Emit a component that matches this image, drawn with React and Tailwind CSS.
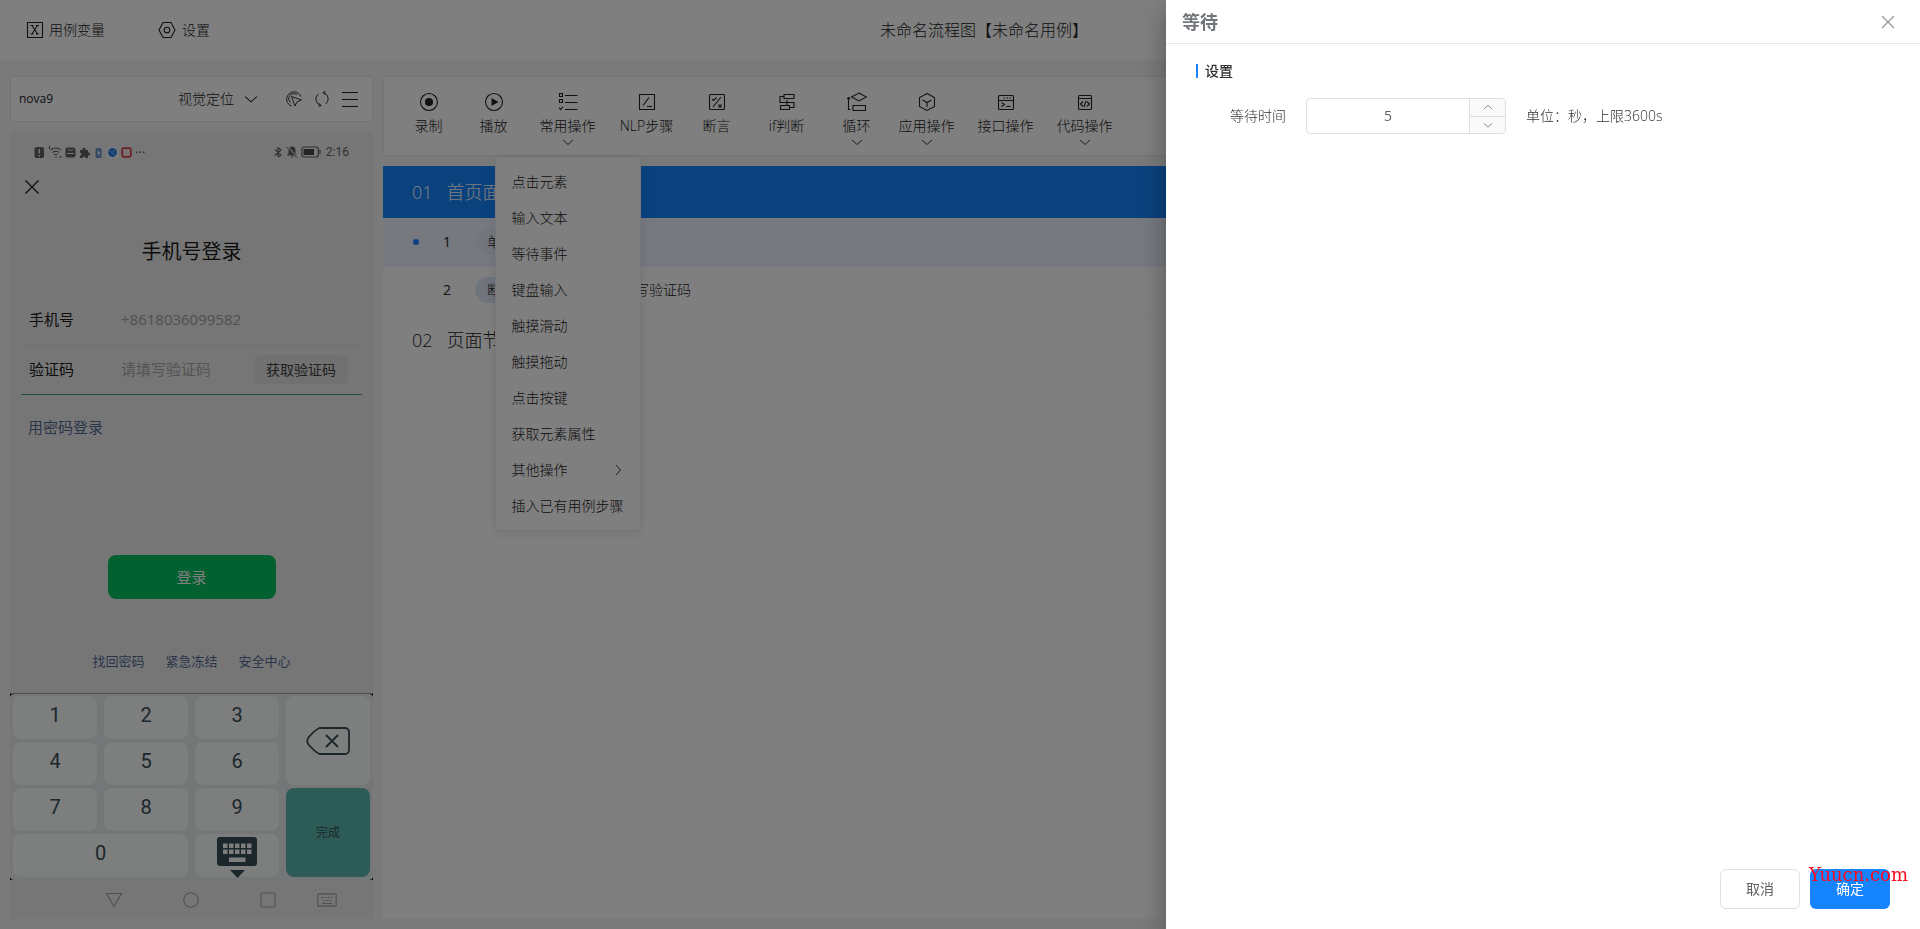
import React, { useState } from 'react';

const TOOLS = [
  { id: 'record', label: '录制', width: 'w-[61px]' },
  { id: 'play', label: '播放', width: 'w-[69px]' },
  { id: 'common', label: '常用操作', width: 'w-[79px]', arrow: true, menu: true },
  { id: 'nlp', label: 'NLP步骤', width: 'w-[79px]' },
  { id: 'assert', label: '断言', width: 'w-[61px]' },
  { id: 'branch', label: 'if判断', width: 'w-[79px]' },
  { id: 'loop', label: '循环', width: 'w-[61px]', arrow: true },
  { id: 'app', label: '应用操作', width: 'w-[79px]', arrow: true },
  { id: 'api', label: '接口操作', width: 'w-[79px]' },
  { id: 'code', label: '代码操作', width: 'w-[79px]', arrow: true },
];

const MENU_ITEMS = [
  { label: '点击元素' },
  { label: '输入文本' },
  { label: '等待事件' },
  { label: '键盘输入' },
  { label: '触摸滑动' },
  { label: '触摸拖动' },
  { label: '点击按键' },
  { label: '获取元素属性' },
  { label: '其他操作', children: true },
  { label: '插入已有用例步骤' },
];

function Svg({ size = 20, className = '', children, ...rest }) {
  return (
    <svg width={size} height={size} viewBox={`0 0 ${size} ${size}`} fill="none" stroke="currentColor" strokeWidth="1.1" className={`shrink-0 ${className}`} aria-hidden="true" {...rest}>
      {children}
    </svg>
  );
}

function Chevron({ dir = 'down', size = 12, className = '' }) {
  const paths = {
    down: 'M1 4l5 4.5L11 4',
    up: 'M1 8.5L6 4l5 4.5',
    right: 'M4 1l4.5 5L4 11',
  };
  return (
    <svg width={size} height={size} viewBox="0 0 12 12" fill="none" stroke="currentColor" strokeWidth=".9" className={`shrink-0 ${className}`} aria-hidden="true">
      <path d={paths[dir]} />
    </svg>
  );
}

const TOOL_ICONS = {
  record: (
    <Svg>
      <circle cx="10" cy="10" r="8.5" />
      <circle cx="10" cy="10" r="4" fill="currentColor" stroke="none" />
    </Svg>
  ),
  play: (
    <Svg>
      <circle cx="10" cy="10" r="8.5" />
      <path d="M7.5 6l7 4-7 4z" fill="currentColor" stroke="none" />
    </Svg>
  ),
  common: (
    <Svg>
      <path d="M1.5 1.5h3v3h-3zM1.5 7.500h3v3h-3zM1 15.5l1.500 2 2.500-3M7 3.500h12.500M7 10.500h12.500M7 17.500h12.500" />
    </Svg>
  ),
  nlp: (
    <Svg>
      <path d="M2.5 2.5h15v15h-15zM6 13.5L12 5.5M10 14.5h5" />
    </Svg>
  ),
  assert: (
    <Svg>
      <rect x="2.5" y="2.5" width="15" height="15" rx="1" />
      <path d="M6 15L14 5M5 7l1.5 1.5L9.5 5.5M11.5 12.5l3 3M14.5 12.5l-3 3" />
    </Svg>
  ),
  branch: (
    <Svg>
      <path d="M7 2.5h10v4H7zM3.5 13.5h9v4h-9zM7 4.5H3v6h14v5h-4.5M8 10.500h4M10 8v5" />
    </Svg>
  ),
  loop: (
    <Svg>
      <path d="M12 1l7.5 4L12 9 4.500 5zM6 13.5h12.500v5H6zM3.500 17.500H1.500V5.500M0 7l1.500-1.500L3 7" />
    </Svg>
  ),
  app: (
    <Svg>
      <path d="M10 1.500l7.500 4v9L10 18.500l-7.500-4v-9zM5.500 8l4.500 2.500L14.500 8M10 10.500V15" />
    </Svg>
  ),
  api: (
    <Svg>
      <rect x="2.5" y="3.5" width="15" height="14" rx="1" />
      <path d="M2.500 8.500h15M5.500 10.500l3 2-3 2M10.500 14.500h4M7.500 6H9M10.500 6H12M13.500 6H15" />
    </Svg>
  ),
  code: (
    <Svg>
      <rect x="3.5" y="3.5" width="13" height="14" rx="1" />
      <path d="M3.500 6.500h13M8 9.500L5.500 12 8 14.500M12 9.500l2.500 2.500-2.500 2.500M11 9l-2 6" />
    </Svg>
  ),
};

function Header() {
  return (
    <header className="flex h-[60px] shrink-0 items-center bg-white px-[26px] text-sm">
      <div className="flex flex-1 items-center gap-[53px]">
        <button className="flex items-center gap-[5px]">
          <Svg size={18}>
            <path d="M1.5 1.5h15v15h-15zM4.500 4.500h3M10 4.500h3M4.500 13h3M10 13h3M6 4.500L11.500 13M11.500 4.500L6 13" />
          </Svg>
          用例变量
        </button>
        <button className="flex items-center gap-1.5">
          <Svg size={18}>
            <path d="M5 1.500h8L17 9l-4 7.500H5L1 9z" />
            <circle cx="9" cy="9" r="2.8" />
          </Svg>
          设置
        </button>
      </div>
      <h1 className="pl-12 text-base font-light">未命名流程图【未命名用例】</h1>
      <div className="flex-1" />
    </header>
  );
}

function DeviceBar() {
  return (
    <div className="flex h-[46px] shrink-0 items-center border border-[#e8e8e8] bg-white pr-3.5 pl-2">
      <span className="flex-1 text-xs font-normal">nova9</span>
      <div className="relative flex items-center">
        <select aria-label="定位方式" className="w-20 appearance-none bg-transparent text-sm outline-none">
          <option>视觉定位</option>
        </select>
        <Chevron size={14} className="pointer-events-none absolute right-0" />
      </div>
      <div className="ml-7 flex items-center gap-3">
        <button aria-label="选取元素">
          <Svg size={16} strokeWidth=".9">
            <path d="M5.500 15A7.300 7.300 0 1 1 14.800 5.500" />
            <path d="M4.500 11.500A5 5 0 0 1 11 3.800" />
            <path d="M5.500 5.500l10 3.500-4.500 1.800L9 15z" />
          </Svg>
        </button>
        <button aria-label="刷新">
          <Svg size={16} strokeWidth=".9">
            <path d="M4 3.200A6.600 6.600 0 0 0 6.800 14.500M12 12.800A6.600 6.600 0 0 0 9.200 1.500M5 12.200l2 2.300-2.500 1M11 3.800L9 1.500l2.500-1" />
          </Svg>
        </button>
        <button aria-label="菜单">
          <Svg size={16}>
            <path d="M0 1.500h16M0 8.500h16M0 15.500h16" />
          </Svg>
        </button>
      </div>
    </div>
  );
}

function StatusBar() {
  return (
    <div className="flex h-10 shrink-0 items-center justify-between px-6 text-[#606060]">
      <div className="flex items-center gap-[3px]">
        <Svg size={11}>
          <rect x=".5" y="0" width="9.5" height="11" rx="2" fill="currentColor" stroke="none" />
          <path d="M5.300 2v4.500M5.300 8v1.500" stroke="#ededed" strokeWidth="1.5" />
        </Svg>
        <Svg size={14}>
          <path d="M2.500 5a8 8 0 0 1 10.500 0M4.500 7.500a5 5 0 0 1 6.500 0M6.300 9.800a2.500 2.500 0 0 1 3 0M1.500 1v3M8 11.500v1.500M11 12h3" />
        </Svg>
        <Svg size={11}>
          <rect x=".5" y=".5" width="10" height="10" rx="2" fill="currentColor" stroke="none" />
          <path d="M3 2.500q2.500 2 5 0M2 6.500h7" stroke="#ededed" strokeWidth="1" />
        </Svg>
        <Svg size={11} stroke="none" fill="currentColor">
          <path d="M1 3h2.500a1.600 1.600 0 1 1 3 0H9v2.500a1.600 1.600 0 1 1 0 3V11H6.500a1.400 1.400 0 0 0-3 0H1V8.500a1.500 1.500 0 0 0 0-3z" />
        </Svg>
        <Svg size={11} stroke="none">
          <rect x="2.5" y="1" width="6" height="10" rx="1.5" fill="#6d93c8" />
          <path d="M6 3L4 6.500h1.500V9l2-3.500H6z" fill="#fff" />
        </Svg>
        <Svg size={11} stroke="none">
          <rect width="11" height="11" rx="3" fill="#fff" />
          <circle cx="5.5" cy="5.5" r="4.5" fill="#2f7ce0" />
          <path d="M2 3.500l3 2 3-3M5 5.500l3.500 3" stroke="#9cc4f5" strokeWidth=".8" />
        </Svg>
        <Svg size={11}>
          <rect x="1.2" y="1.2" width="8.6" height="8.6" rx="1.5" fill="#f4e4e4" stroke="#d9434f" strokeWidth="1.8" />
        </Svg>
        <Svg size={10} stroke="none" fill="currentColor">
          <path d="M1 4.500h1.500V6H1zM4.500 4.500H6V6H4.500zM8 4.500h1.500V6H8z" />
        </Svg>
      </div>
      <div className="flex items-center gap-[3px]">
        <Svg size={10}>
          <path d="M2 2.500L8 8l-3 2.500v-10L8 3 2 8.500" />
        </Svg>
        <Svg size={12} stroke="none" fill="currentColor">
          <path d="M6 .5a3.500 3.500 0 0 1 3.500 3.500v3l1.500 2.500H1L2.500 7V4A3.500 3.500 0 0 1 6 .5zM4.500 10.500h3L6 12z" />
          <path d="M.5 0l11 11" stroke="#ededed" strokeWidth="1.2" />
          <path d="M.5 1l10.500 10.500" stroke="currentColor" strokeWidth="1" />
        </Svg>
        <svg width="20" height="12" viewBox="0 0 20 12" fill="none" stroke="currentColor" aria-hidden="true">
          <rect x=".8" y="1" width="16.5" height="10" rx="2" strokeWidth="1.2" />
          <path d="M2.500 3h10.500v6H2.500z" fill="#484848" stroke="none" />
          <path d="M19 4v4" strokeWidth="1.3" />
        </svg>
        <span className="pl-0.5 font-['Roboto'] text-xs">2:16</span>
      </div>
    </div>
  );
}

function Key({ children, className = 'pb-1.5', label }) {
  return (
    <button aria-label={label} className={`flex items-center justify-center rounded-lg bg-[#fafdfc] font-['Roboto'] text-xl text-[#384e56] ${className}`}>
      {children}
    </button>
  );
}

function Keypad() {
  return (
    <div className="shrink-0 border-t border-[#999] bg-black">
      <div className="grid grid-cols-4 grid-rows-[repeat(4,43px)] gap-x-[7px] gap-y-[3px] rounded bg-[#e9ecf0] px-[3px] pt-0.5 pb-[3px]">
        <Key>1</Key>
        <Key>2</Key>
        <Key>3</Key>
        <Key label="删除" className="row-span-2">
          <svg width="44" height="28" viewBox="0 0 44 28" fill="none" stroke="currentColor" strokeWidth="1.8" aria-hidden="true">
            <path d="M13.500 1H39a4 4 0 0 1 4 4v18a4 4 0 0 1-4 4H13.500C9 25 5.500 21 2.500 17.500q-2.500-3.500 0-7C5.500 7 9 3 13.500 1z" />
            <path d="M20 8l12 12M32 8L20 20" />
          </svg>
        </Key>
        <Key>4</Key>
        <Key>5</Key>
        <Key>6</Key>
        <Key>7</Key>
        <Key>8</Key>
        <Key>9</Key>
        <button className="row-span-2 rounded-lg bg-[#5bb8ae] text-xs text-[#384e56]">完成</button>
        <Key className="col-span-2 pb-1.5">0</Key>
        <Key label="收起键盘" className="pt-0.5">
          <svg width="42" height="42" viewBox="0 0 42 42" fill="currentColor" aria-hidden="true">
            <rect x="1" y="1" width="40" height="29" rx="3" />
            <path d="M14 34h15l-7.500 8z" />
            <path fill="#fafdfc" d="M7 7.500h4.500v4.500H7zM13 7.500h4.500v4.500H13zM19 7.500h4.500v4.500H19zM25 7.500h4.500v4.500H25zM31 7.500h4.500v4.500H31zM7 13.500h4.500v4.500H7zM13 13.500h4.500v4.500H13zM19 13.500h4.500v4.500H19zM25 13.500h4.500v4.500H25zM31 13.500h4.500v4.500H31zM13 21.500h16.500v4.500H13z" />
          </svg>
        </Key>
      </div>
    </div>
  );
}

function PhoneNav() {
  return (
    <div className="flex h-[39px] shrink-0 items-center justify-end gap-[61px] pr-9 text-[#a0a0a0]">
      <Svg size={16}>
        <path d="M.5 1.500h15L8 14.500z" />
      </Svg>
      <Svg size={16}>
        <circle cx="8" cy="8" r="7.3" />
      </Svg>
      <div className="flex items-center gap-[41px]">
        <Svg size={16}>
          <rect x="1" y="1" width="14" height="14" rx=".5" />
        </Svg>
        <svg width="20" height="14" viewBox="0 0 20 14" fill="none" stroke="currentColor" strokeWidth="1.2" aria-hidden="true">
          <rect x=".8" y=".8" width="18.4" height="12.4" rx="1" />
          <path d="M4 4.500h12M5.500 7.500h9" strokeDasharray="2 1.3" />
          <path d="M5 10.500h10" />
        </svg>
      </div>
    </div>
  );
}

function PhoneScreen() {
  return (
    <div className="flex flex-1 flex-col bg-[#ededed] font-normal text-[#1a1a1a]">
      <StatusBar />
      <div className="flex h-[30px] items-center px-3.5">
        <button aria-label="关闭">
          <Svg size={16} strokeWidth="1.3">
            <path d="M1.500 1.500l13 13M14.500 1.500l-13 13" />
          </Svg>
        </button>
      </div>
      <h2 className="mt-9 text-center text-xl">手机号登录</h2>
      <div className="mx-[11px] mt-7">
        <div className="flex h-[51px] items-center border-b border-[#e4e4e4] px-2">
          <label htmlFor="phone" className="w-[92px] text-[15px]">手机号</label>
          <input id="phone" defaultValue="+8618036099582" className="min-w-0 flex-1 bg-transparent text-[15px] text-[#a0a0a0] outline-none" />
        </div>
        <div className="flex h-[50px] items-center border-b border-[#3f9f7f] pr-3.5 pl-2">
          <label htmlFor="captcha" className="w-[92px] text-[15px]">验证码</label>
          <input id="captcha" placeholder="请填写验证码" className="min-w-0 flex-1 bg-transparent text-[15px] outline-none placeholder:text-[#a8a8a8]" />
          <button className="h-[29px] rounded-md bg-[#e2e2e2] px-3 text-sm text-[#404040]">获取验证码</button>
        </div>
      </div>
      <a href="#password" className="mt-5 self-start pl-[18px] text-[15px] leading-6 text-[#576b95]">用密码登录</a>
      <div className="flex-1" />
      <button className="h-11 w-[168px] self-center rounded-lg bg-[#07c160] text-[15px] text-white">登录</button>
      <nav className="mt-[52px] mb-[22px] flex justify-center text-[13px] leading-5 text-[#576b95]">
        <a href="#recover" className="px-2.5">找回密码</a>
        <a href="#freeze" className="border-x border-[#e8e8e8] px-2.5">紧急冻结</a>
        <a href="#security" className="px-2.5">安全中心</a>
      </nav>
      <Keypad />
      <PhoneNav />
    </div>
  );
}

function OperationMenu() {
  return (
    <ul className="absolute top-full left-1/2 z-10 mt-0.5 w-[146px] -translate-x-1/2 rounded border border-[#ebeef5] bg-white py-1.5 shadow-[0_2px_12px_rgba(0,0,0,0.1)]">
      {MENU_ITEMS.map((item) => (
        <li key={item.label}>
          <button className="flex h-9 w-full items-center justify-between px-4 text-sm whitespace-nowrap">
            {item.label}
            {item.children && <Chevron dir="right" />}
          </button>
        </li>
      ))}
    </ul>
  );
}

function Toolbar() {
  return (
    <div className="flex h-20 shrink-0 border border-[#e8e8e8] bg-white px-3.5">
      {TOOLS.map((tool) => (
        <div key={tool.id} className={`relative ${tool.width}`}>
          <button className="flex w-full flex-col items-center pt-[15px]">
            {TOOL_ICONS[tool.id]}
            <span className="mt-1 text-sm">{tool.label}</span>
            {tool.arrow && <Chevron />}
          </button>
          {tool.menu && <OperationMenu />}
        </div>
      ))}
    </div>
  );
}

function StepRow({ index, tag, text, active }) {
  return (
    <div className={`flex h-12 items-center border-b pl-[30px] text-sm ${active ? 'border-[#e4ebfa] bg-[#ecf2ff]' : 'border-[#fafafa]'}`}>
      <span className={`size-1.5 rounded-full ${active ? 'bg-[#1684fc]' : ''}`} />
      <span className="w-14 pl-6 font-normal">{index}</span>
      <span className={`rounded-full px-3 leading-[26px] ${active ? 'bg-[#e6edfa]' : 'bg-[#dfe8fb]'}`}>{tag}</span>
      {text && <span className="pl-20">{text}</span>}
    </div>
  );
}

function StepList() {
  return (
    <div className="mt-2.5 flex-1 bg-white">
      <div className="flex h-[52px] items-center gap-3.5 bg-[#1684fc] pl-[29px] text-lg text-white">
        <span>01</span>
        <span>首页面</span>
      </div>
      <StepRow index={1} tag="单击" active />
      <StepRow index={2} tag="断言" text="请填写验证码" />
      <div className="flex h-[52px] items-center gap-3.5 pl-[29px] text-lg">
        <span>02</span>
        <span>页面节点</span>
      </div>
    </div>
  );
}

function WaitDrawer() {
  const [seconds, setSeconds] = useState(5);
  const step = (n) => setSeconds((v) => Math.min(3600, Math.max(0, Number(v) + n)));

  return (
    <aside className="relative flex w-[754px] max-w-full flex-col bg-white text-sm text-[#303133] shadow-[0_8px_10px_-5px_rgba(0,0,0,0.2),0_16px_24px_2px_rgba(0,0,0,0.14),0_6px_30px_5px_rgba(0,0,0,0.12)]">
      <div className="flex h-11 items-center justify-between border-b border-[#e4e7ed] pr-6 pl-4">
        <h2 className="text-lg font-bold text-[#72767b]">等待</h2>
        <button aria-label="关闭" className="text-[#909399]">
          <Svg size={16}>
            <path d="M2 2l12 12M14 2L2 14" />
          </Svg>
        </button>
      </div>
      <div className="flex-1 px-[30px] pt-5">
        <h3 className="border-l-2 border-[#1684fc] pl-[7px] leading-[14px] font-medium">设置</h3>
        <div className="mt-5 flex items-center pl-[34px]">
          <label htmlFor="wait" className="w-[76px]">等待时间</label>
          <div className="flex h-9 w-[200px] overflow-hidden rounded border border-[#dcdfe6]">
            <input id="wait" inputMode="numeric" value={seconds} onChange={(e) => setSeconds(e.target.value)} className="min-w-0 flex-1 text-center font-normal text-[#606266] outline-none" />
            <div className="flex w-9 flex-col divide-y divide-[#dcdfe6] border-l border-[#dcdfe6] bg-[#fafafa] text-[#606266]">
              <button aria-label="增加" onClick={() => step(1)} className="flex flex-1 items-center justify-center"><Chevron dir="up" size={10} /></button>
              <button aria-label="减少" onClick={() => step(-1)} className="flex flex-1 items-center justify-center"><Chevron size={10} /></button>
            </div>
          </div>
          <span className="pl-5">单位：秒，上限3600s</span>
        </div>
      </div>
      <div className="flex justify-end gap-2.5 pr-[30px] pb-5">
        <button className="h-10 w-20 rounded-md border border-[#dcdfe6] font-normal text-[#606266]">取消</button>
        <button className="h-10 w-20 rounded-md bg-[#1684ff] font-normal text-white">确定</button>
      </div>
      <span className="absolute right-3 bottom-11 font-['DejaVu_Serif',serif] text-lg leading-5 font-normal text-[#ff0a1e]">Yuucn.com</span>
    </aside>
  );
}

export default function App() {
  return (
    <div className="flex h-screen flex-col bg-[#f5f5f5] font-['Open_Sans','Noto_Sans_CJK_SC',sans-serif] font-light text-[#222]">
      <Header />
      <main className="flex min-h-0 flex-1 gap-2.5 px-2.5 pt-4 pb-2.5">
        <section className="flex w-[363px] shrink-0 flex-col gap-2.5">
          <DeviceBar />
          <PhoneScreen />
        </section>
        <section className="flex min-w-0 flex-1 flex-col">
          <Toolbar />
          <StepList />
        </section>
      </main>
      <div className="fixed inset-0 z-20 flex justify-end bg-black/50">
        <WaitDrawer />
      </div>
    </div>
  );
}
